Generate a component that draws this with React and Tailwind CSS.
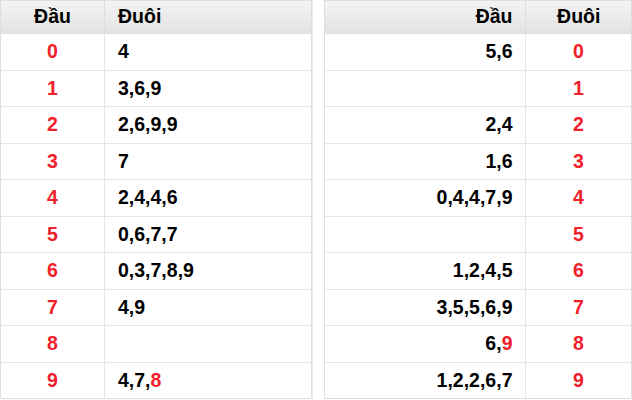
import React from 'react';

const leftRows = [
    { dau: '0', duoi: [['4']] },
    { dau: '1', duoi: [['3,6,9']] },
    { dau: '2', duoi: [['2,6,9,9']] },
    { dau: '3', duoi: [['7']] },
    { dau: '4', duoi: [['2,4,4,6']] },
    { dau: '5', duoi: [['0,6,7,7']] },
    { dau: '6', duoi: [['0,3,7,8,9']] },
    { dau: '7', duoi: [['4,9']] },
    { dau: '8', duoi: [] },
    { dau: '9', duoi: [['4,7,'], ['8', true]] }
];

const rightRows = [
    { dau: [['5,6']], duoi: '0' },
    { dau: [], duoi: '1' },
    { dau: [['2,4']], duoi: '2' },
    { dau: [['1,6']], duoi: '3' },
    { dau: [['0,4,4,7,9']], duoi: '4' },
    { dau: [], duoi: '5' },
    { dau: [['1,2,4,5']], duoi: '6' },
    { dau: [['3,5,5,6,9']], duoi: '7' },
    { dau: [['6,'], ['9', true]], duoi: '8' },
    { dau: [['1,2,2,6,7']], duoi: '9' }
];

// Render number list, some parts highlighted in red
const Nums = ({ parts }) => (
    <>
        {parts.map(([text, red], i) => (
            <span key={i} className={red ? 'text-[#f0212b]' : ''}>{text}</span>
        ))}
    </>
);

const headerBg = 'bg-gradient-to-b from-[#f3f3f3] to-[#e3e3e3]';

const App = () => {
    return (
        <div
            className="w-[632px] h-[400px] overflow-hidden bg-white flex gap-[12px] text-[19.5px] leading-none font-bold text-black"
            style={{ fontFamily: '"Liberation Sans", Arial, sans-serif' }}
        >
            {/* Left table */}
            <div className="w-[315px] h-[399px] flex flex-col border border-[#e2ddd7] shadow-[1px_0_1px_rgba(0,0,0,0.08)]">
                <div className={`h-[33px] flex border-b border-[#e2ddd7] ${headerBg}`}>
                    <div className="w-[104px] border-r border-[#e2ddd7] flex items-center justify-center">Đầu</div>
                    <div className="flex-1 flex items-center pl-[13px]">Đuôi</div>
                </div>
                {leftRows.map((row, i) => (
                    <div key={i} className={`flex-1 flex ${i > 0 ? 'border-t border-[#e8e4df]' : ''}`}>
                        <div className="w-[104px] border-r border-[#e8e4df] flex items-center justify-center text-[#f0212b]">
                            {row.dau}
                        </div>
                        <div className="flex-1 flex items-center pl-[13px]">
                            <Nums parts={row.duoi} />
                        </div>
                    </div>
                ))}
            </div>

            {/* Right table */}
            <div className="w-[310px] h-[399px] flex flex-col border border-[#e2ddd7]">
                <div className={`h-[33px] flex border-b border-[#e2ddd7] ${headerBg}`}>
                    <div className="w-[201px] border-r border-[#e2ddd7] flex items-center justify-end pr-[13px]">Đầu</div>
                    <div className="flex-1 flex items-center justify-center">Đuôi</div>
                </div>
                {rightRows.map((row, i) => (
                    <div key={i} className={`flex-1 flex ${i > 0 ? 'border-t border-[#e8e4df]' : ''}`}>
                        <div className="w-[201px] border-r border-[#e8e4df] flex items-center justify-end pr-[13px]">
                            <Nums parts={row.dau} />
                        </div>
                        <div className="w-[104px] flex items-center justify-center text-[#f0212b]">
                            {row.duoi}
                        </div>
                    </div>
                ))}
            </div>
        </div>
    );
};

export default App;
